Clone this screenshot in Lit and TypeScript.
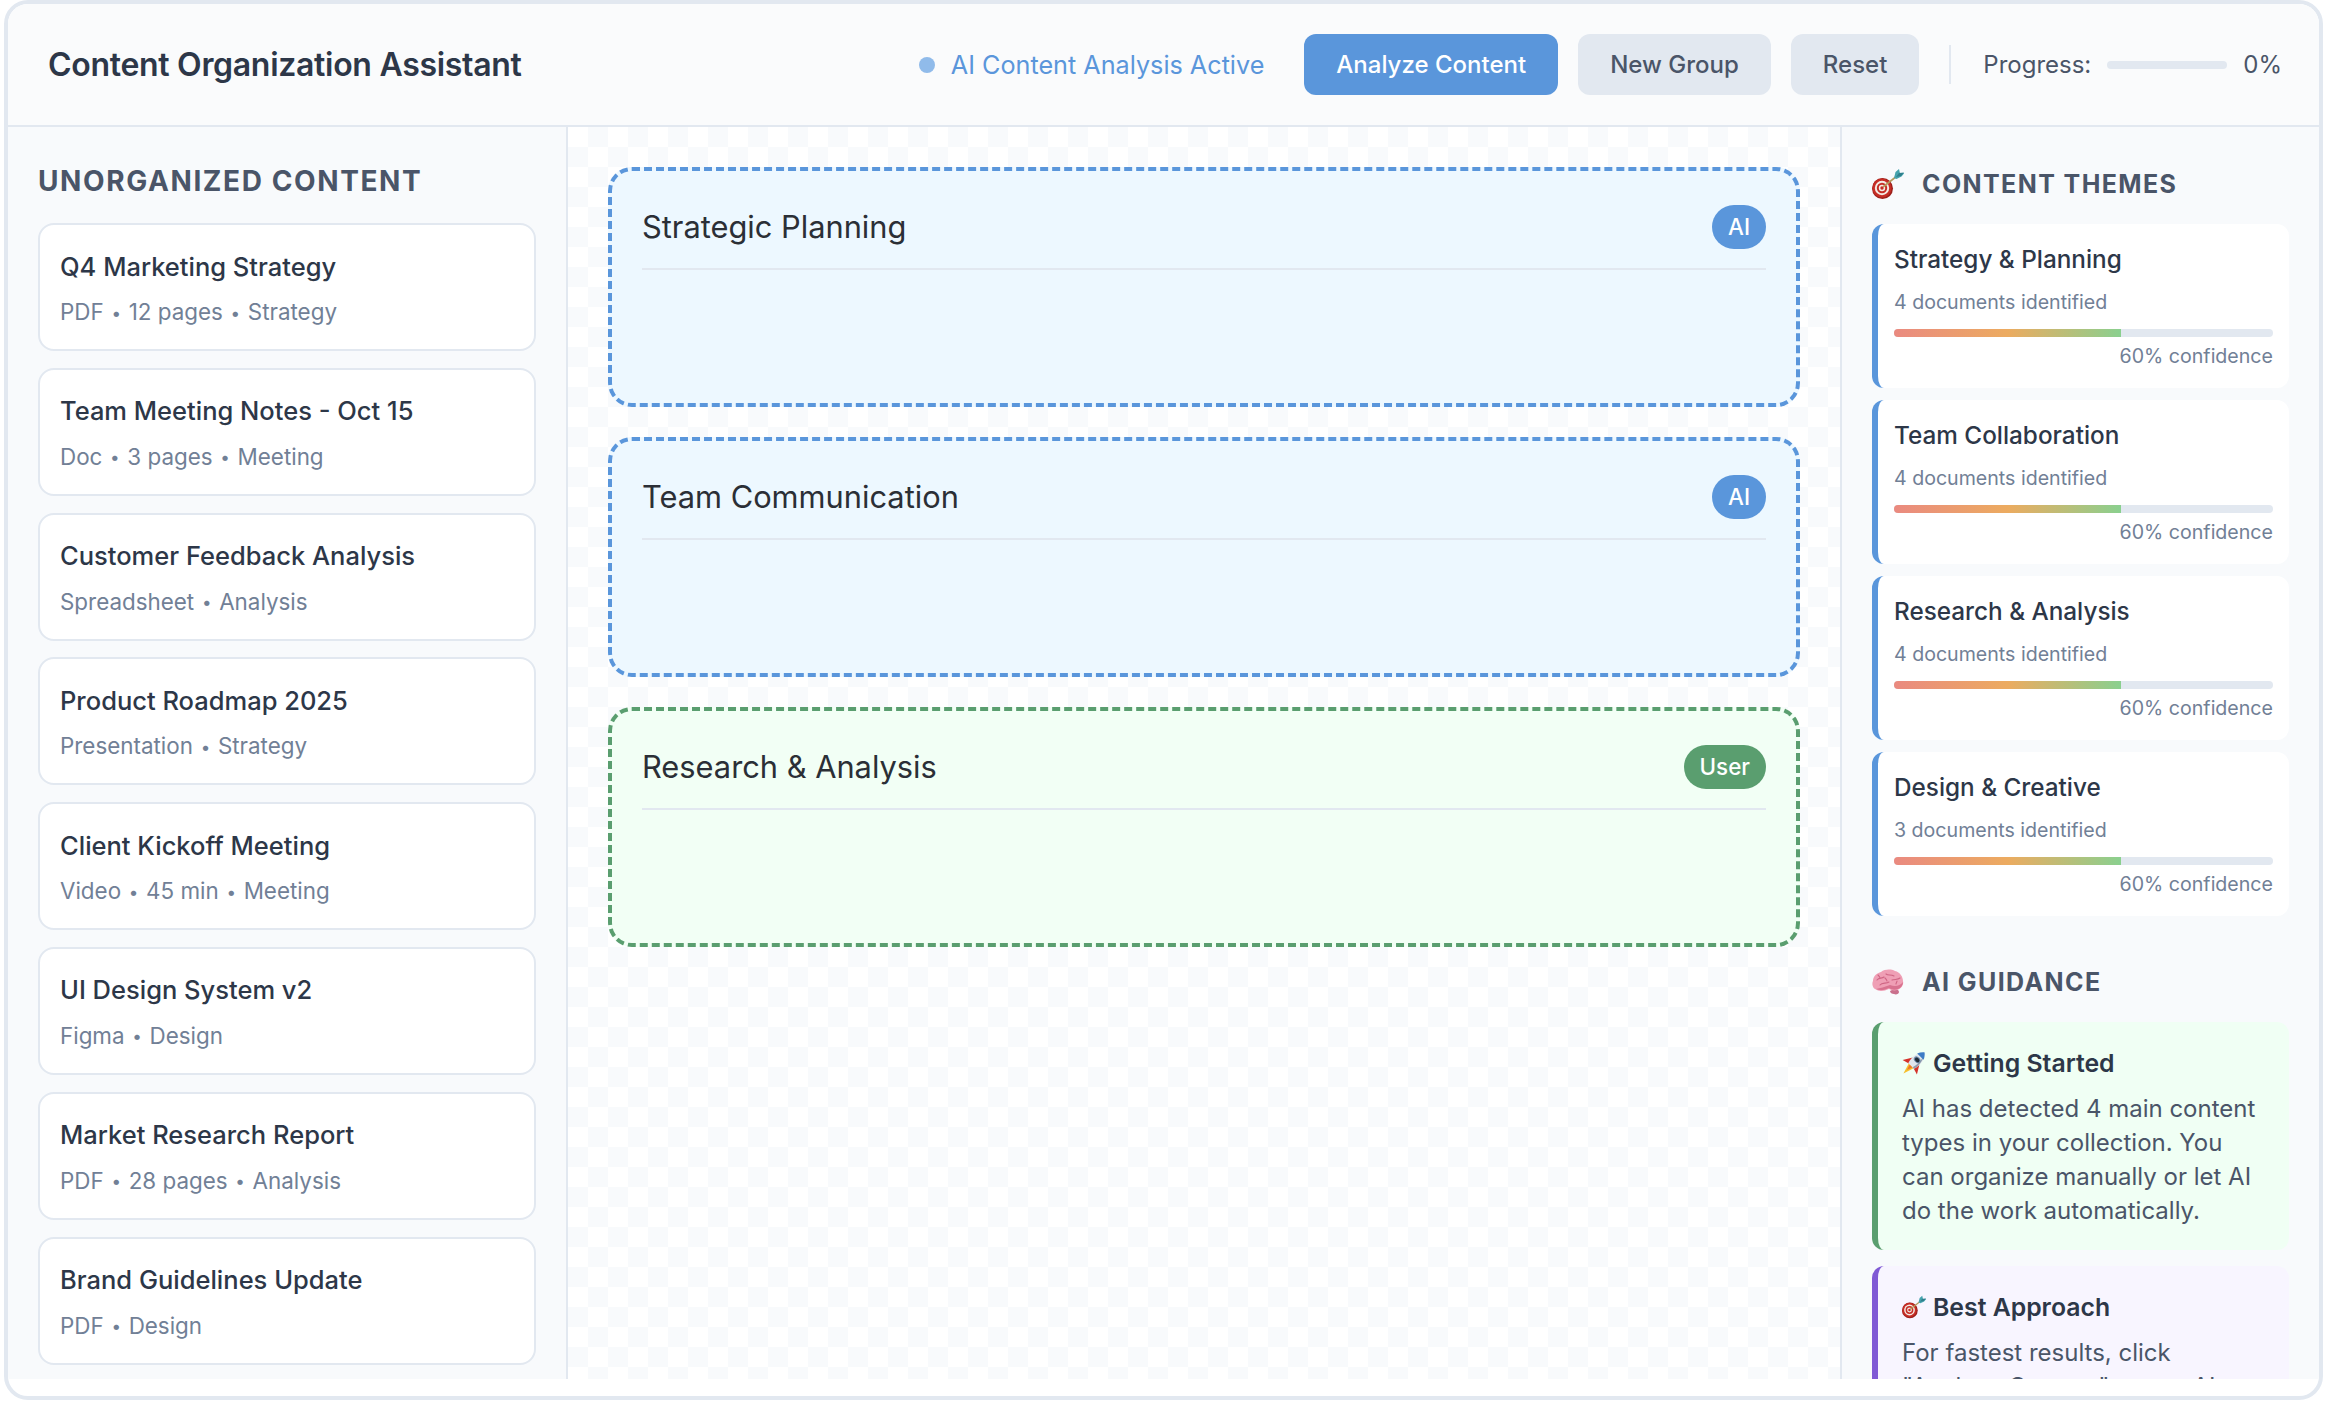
import { LitElement, html, css, svg } from 'lit'
import { customElement } from 'lit/decorators.js'

const files = [
  ['Q4 Marketing Strategy', 'PDF • 12 pages • Strategy'],
  ['Team Meeting Notes - Oct 15', 'Doc • 3 pages • Meeting'],
  ['Customer Feedback Analysis', 'Spreadsheet • Analysis'],
  ['Product Roadmap 2025', 'Presentation • Strategy'],
  ['Client Kickoff Meeting', 'Video • 45 min • Meeting'],
  ['UI Design System v2', 'Figma • Design'],
  ['Market Research Report', 'PDF • 28 pages • Analysis'],
  ['Brand Guidelines Update', 'PDF • Design'],
]

const groups = [
  ['Strategic Planning', 'AI'],
  ['Team Communication', 'AI'],
  ['Research & Analysis', 'User'],
]

const themes = [
  ['Strategy & Planning', '4 documents identified'],
  ['Team Collaboration', '4 documents identified'],
  ['Research & Analysis', '4 documents identified'],
  ['Design & Creative', '3 documents identified'],
]

const target = svg`<svg viewBox="0 0 32 32" class="ico">
  <circle cx="10.500" cy="20.500" r="10.500" fill="#9c1f1a"/>
  <circle cx="10" cy="20" r="9.600" fill="#c62d25"/>
  <circle cx="10" cy="20" r="7.200" fill="#f4ebe4"/>
  <circle cx="10" cy="20" r="5.200" fill="#c62d25"/>
  <circle cx="10" cy="20" r="3.200" fill="#f4ebe4"/>
  <circle cx="10" cy="20" r="1.700" fill="#c62d25"/>
  <path d="M11 19 25 8" stroke="#b49a5c" stroke-width="1.600"/>
  <path d="M22 10l1.500-6 3.500-3 1 4.500 4.500-.5-3 3.500-5 2.500z" fill="#45a3ad"/>
  <path d="M24 9l3-4 5-.5-3 3.500z" fill="#2f7f8c"/>
</svg>`

const brain = svg`<svg viewBox="0 0 32 26" class="ico">
  <path d="M22 20c3 0 5 1 5 3 0 2-3 3-5 2-2 0-4-1-4-3z" fill="#c9708c"/>
  <path d="M3 20C0 18 0 14 1 12 1 7 5 4 9 3c4-3 10-3 14-1 5 1 8 6 8 10 1 4-2 8-6 9-3 1-6 0-8-1-3 1-5 2-8 2-2 0-4-1-6-2z" fill="#ef9fb5"/>
  <path d="M4 20c4 2 9 1 13-1 3 2 6 2 9 1 3-1 5-4 5-7-3 4-8 5-13 3-5 2-10 3-14 4z" fill="#d8728f"/>
  <path d="M5 11c2-3 5-1 7-3M8 16c2-3 6-1 9-3M14 5c2 2 5 0 8 2M20 11c3-1 6 0 8-2M6 6c1 1 2 2 2 3M13 9c1 1 2 2 2 3M24 15c0-1 1-2 1-3" fill="none" stroke="#cf6584" stroke-width="1.100" stroke-linecap="round"/>
</svg>`

const rocket = svg`<svg viewBox="0 0 24 24" class="ico">
  <g transform="rotate(45 12 12) translate(12 0) scale(1.35 1) translate(-12 0)">
    <path d="M9.500 16h5L12 27z" fill="#f6bf2c"/>
    <path d="M10.500 16h3L12 22z" fill="#f0762a"/>
    <path d="M8.500 9 4.500 18 9.500 16zM15.500 9 19.500 18 14.500 16z" fill="#d5322a"/>
    <path d="M12-3c4 5 4.500 12 3 19H9C7.500 9 8 2 12-3z" fill="#dfe5ec"/>
    <path d="M13.500 16c1-5 1-10 0-16 2 5 2.500 11 1.500 16z" fill="#8f9cac"/>
    <path d="M12-3c1.500 1.700 2.600 3.700 3.300 6H8.700c.7-2.300 1.800-4.300 3.300-6z" fill="#3d7cc6"/>
    <circle cx="12" cy="7.500" r="2.800" fill="#6d8aa8"/>
    <circle cx="12" cy="7.500" r="1.900" fill="#1f2a36"/>
  </g>
</svg>`

@customElement('app-root')
export class AppRoot extends LitElement {
  static styles = css`
    :host {
      display: block;
      font-family: Inter, "Liberation Sans", sans-serif;
    }
    .shell {
      box-sizing: border-box;
      height: 1400px;
      margin: 0 7px 0 4px;
      border: 4px solid #e2e8f0;
      border-radius: 24px;
      background: #fff;
      overflow: hidden;
      display: flex;
      flex-direction: column;
    }
    header {
      box-sizing: border-box;
      height: 123px;
      flex: none;
      display: flex;
      align-items: center;
      padding: 0 37px 0 40px;
      background: #fafbfc;
      border-bottom: 2px solid #e2e8f0;
    }
    h1 {
      margin: 0;
      font-size: 32px;
      font-weight: 600;
      letter-spacing: -0.3px;
      color: #2d3748;
      flex: 1;
    }
    .status {
      display: flex;
      align-items: center;
      gap: 16px;
      font-size: 25.200px;
      color: #5a96db;
      margin-right: 40px;
    }
    .dot {
      width: 16px;
      height: 16px;
      border-radius: 50%;
      background: #90bbea;
    }
    button {
      height: 61px;
      padding: 0 32px;
      margin-right: 20px;
      border: 0;
      border-radius: 12px;
      font: 500 24px Inter, "Liberation Sans", sans-serif;
      background: #e2e8f0;
      color: #4a5568;
    }
    button.primary {
      background: #5a96db;
      color: #fff;
    }
    .progress {
      display: flex;
      align-items: center;
      height: 39px;
      margin-left: 10px;
      padding-left: 32px;
      border-left: 2px solid #e2e8f0;
      font-size: 24px;
      color: #4a5568;
    }
    .track {
      width: 120px;
      height: 8px;
      margin: 0 16px;
      border-radius: 4px;
      background: #e2e8f0;
    }
    main {
      height: 1252px;
      flex: none;
      display: flex;
      min-height: 0;
    }
    .left {
      box-sizing: border-box;
      width: 560px;
      flex: none;
      padding: 36px 30px;
      background: #f8fafc;
      border-right: 2px solid #e2e8f0;
      overflow: hidden;
    }
    h2 {
      margin: 0;
      font-size: 28px;
      font-weight: 700;
      letter-spacing: 1.600px;
      color: #4a5568;
    }
    .left h2 {
      margin-bottom: 24px;
      line-height: 36px;
    }
    .file {
      box-sizing: border-box;
      height: 128px;
      margin-bottom: 16.800px;
      padding: 23.500px 20px;
      background: #fff;
      border: 2px solid #e2e8f0;
      border-radius: 16px;
    }
    .file-name {
      font-size: 25.500px;
      line-height: 36px;
      font-weight: 500;
      color: #2d3748;
      margin-bottom: 11.500px;
    }
    .file-meta {
      font-size: 22.400px;
      line-height: 32px;
      color: #718096;
    }
    .sep {
      font-size: 17px;
      margin: 0 1.400px;
      vertical-align: 1.500px;
    }
    .canvas {
      flex: 1;
      min-width: 0;
      box-sizing: border-box;
      padding: 40px;
      background-color: #fff;
      background-image: conic-gradient(#f8fafc 25%, transparent 0 50%, #f8fafc 0 75%, transparent 0);
      background-size: 40px 40px;
    }
    .group {
      box-sizing: border-box;
      height: 240px;
      margin-bottom: 30px;
      padding: 34px 30px 0;
      border: 4px dashed #5a96db;
      border-radius: 24px;
      background: #edf8ff;
    }
    .group.user {
      border-color: #5a9e6f;
      background: #f2fff5;
    }
    .group-head {
      box-sizing: border-box;
      height: 65px;
      display: flex;
      justify-content: space-between;
      align-items: flex-start;
      border-bottom: 2px solid #e2e8f0;
    }
    .group-name {
      font-size: 30.800px;
      line-height: 44px;
      color: #2b2f36;
    }
    .badge {
      height: 44px;
      line-height: 44px;
      padding: 0 16px;
      border-radius: 22px;
      font-size: 22.400px;
      font-weight: 500;
      color: #fff;
      background: #5a96db;
    }
    .user .badge {
      background: #5a9e6f;
    }
    .right {
      box-sizing: border-box;
      width: 479px;
      flex: none;
      padding: 39px 30px 0;
      background: #f8fafc;
      border-left: 2px solid #e2e8f0;
      overflow: hidden;
    }
    .right h2 {
      display: flex;
      align-items: center;
      gap: 18px;
      font-size: 25px;
      letter-spacing: 1.400px;
      line-height: 36px;
      margin-bottom: 22px;
    }
    .right h2 .ico {
      width: 32px;
      height: 32px;
    }
    .ico {
      display: block;
      flex: none;
    }
    .theme {
      box-sizing: border-box;
      height: 164px;
      margin-bottom: 12px;
      padding: 18.500px 16px 0;
      border-left: 6px solid #5a96db;
      border-radius: 12px;
      background: #fff;
    }
    .theme-name {
      font-size: 24.300px;
      line-height: 32px;
      font-weight: 500;
      color: #2d3748;
    }
    .theme-docs, .theme-conf {
      font-size: 19.600px;
      line-height: 28px;
      color: #718096;
    }
    .theme-docs {
      margin-top: 13px;
    }
    .bar {
      height: 8px;
      margin-top: 13.500px;
      border-radius: 4px;
      background: #e2e8f0;
      overflow: hidden;
    }
    .fill {
      height: 100%;
      background: linear-gradient(90deg, #ea8a80, #ecab60, #8ad08f);
    }
    .theme-conf {
      text-align: right;
      margin-top: 4.500px;
    }
    .guidance-title {
      margin-top: 48px;
    }
    .tip {
      box-sizing: border-box;
      margin-bottom: 16px;
      padding: 24px 20px 22px 24px;
      border-left: 6px solid #5a9e6f;
      border-radius: 12px;
      background: #f0fff4;
    }
    .tip.purple {
      border-color: #805ad5;
      background: #f8f5ff;
    }
    .tip-title {
      display: flex;
      align-items: center;
      gap: 7px;
      font-size: 24.800px;
      line-height: 34px;
      font-weight: 600;
      color: #2d3748;
      margin-bottom: 12px;
    }
    .tip-title .ico {
      width: 24px;
      height: 24px;
    }
    .tip p {
      margin: 0;
      font-size: 24px;
      line-height: 34px;
      color: #4a5568;
    }
  `

  meta(text: string) {
    const parts = text.split(' • ')
    return parts.map((p, i) => html`${i ? html` <span class="sep">•</span> ` : ''}${p}`)
  }

  render() {
    return html`<div class="shell">
      <header>
        <h1>Content Organization Assistant</h1>
        <div class="status"><span class="dot"></span>AI Content Analysis Active</div>
        <button class="primary">Analyze Content</button>
        <button>New Group</button>
        <button>Reset</button>
        <div class="progress">Progress:<div class="track"></div>0%</div>
      </header>
      <main>
        <section class="left">
          <h2>UNORGANIZED CONTENT</h2>
          ${files.map(([name, meta]) => html`<div class="file">
            <div class="file-name">${name}</div>
            <div class="file-meta">${this.meta(meta)}</div>
          </div>`)}
        </section>
        <section class="canvas">
          ${groups.map(([name, by]) => html`<div class="group ${by === 'User' ? 'user' : ''}">
            <div class="group-head">
              <div class="group-name">${name}</div>
              <div class="badge">${by}</div>
            </div>
          </div>`)}
        </section>
        <aside class="right">
          <h2>${target}CONTENT THEMES</h2>
          ${themes.map(([name, docs]) => html`<div class="theme">
            <div class="theme-name">${name}</div>
            <div class="theme-docs">${docs}</div>
            <div class="bar"><div class="fill" style="width: 60%"></div></div>
            <div class="theme-conf">60% confidence</div>
          </div>`)}
          <h2 class="guidance-title">${brain}AI GUIDANCE</h2>
          <div class="tip">
            <div class="tip-title">${rocket}Getting Started</div>
            <p>AI has detected 4 main content types in your collection. You can organize manually or let AI do the work automatically.</p>
          </div>
          <div class="tip purple">
            <div class="tip-title">${target}Best Approach</div>
            <p>For fastest results, click "Analyze Content" to see AI suggestions first.</p>
          </div>
        </aside>
      </main>
    </div>`
  }
}
